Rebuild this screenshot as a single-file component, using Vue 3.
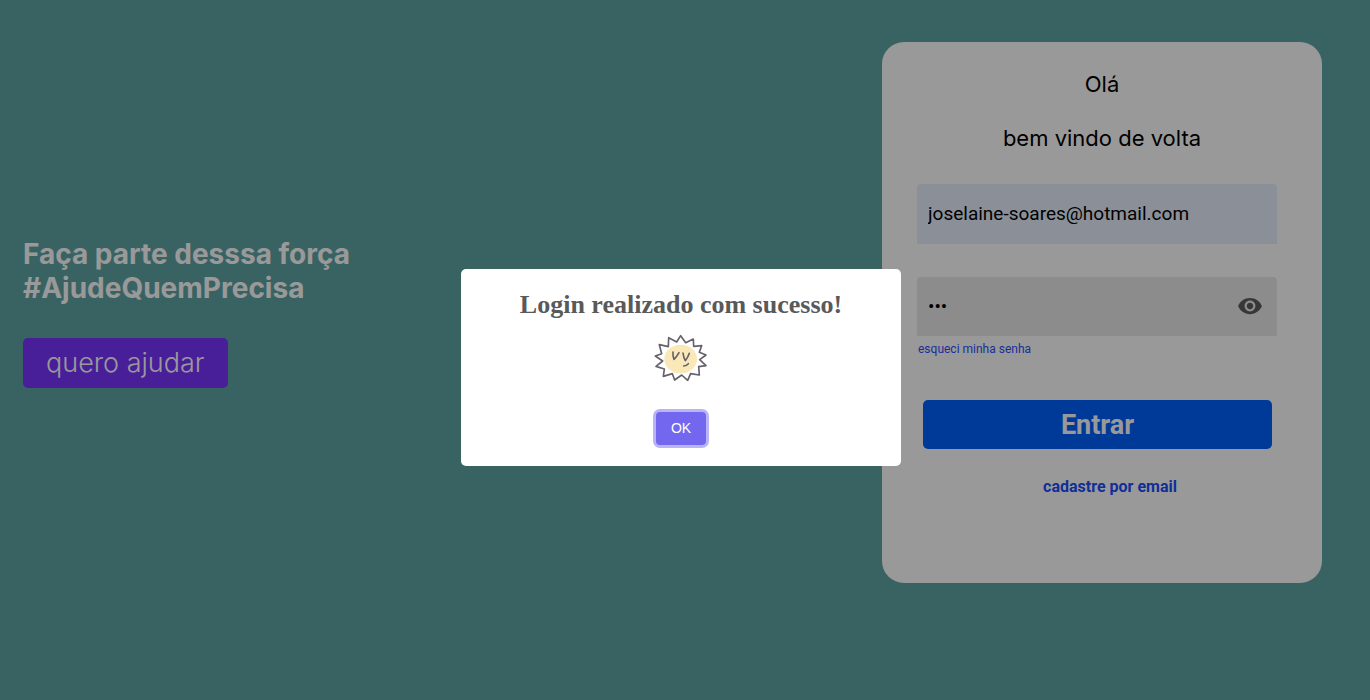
<script setup>
import { ref } from 'vue'

const email = ref('joselaine-soares@hotmail.com')
const password = ref('123')
const showPassword = ref(false)
const dialogOpen = ref(true)
</script>

<template>
  <div class="page">
    <main class="layout">
      <section class="intro">
        <h1>Faça parte desssa força<br />#AjudeQuemPrecisa</h1>
        <button type="button" class="help">quero ajudar</button>
      </section>

      <form class="card" @submit.prevent="dialogOpen = true">
        <header class="welcome">
          <p>Olá</p>
          <p>bem vindo de volta</p>
        </header>
        <div class="fields">
          <input v-model="email" class="field email" type="email" aria-label="Email" />
          <div class="field secret">
            <input v-model="password" :type="showPassword ? 'text' : 'password'" aria-label="Senha" />
            <button type="button" class="eye" aria-label="Mostrar senha" @click="showPassword = !showPassword">
              <svg viewBox="0 0 24 24" width="26" height="26" aria-hidden="true">
                <path d="M12 4.5C7 4.5 2.73 7.61 1 12c1.73 4.39 6 7.5 11 7.5s9.27-3.11 11-7.5c-1.73-4.39-6-7.5-11-7.5zM12 17c-2.76 0-5-2.24-5-5s2.24-5 5-5 5 2.24 5 5-2.24 5-5 5zm0-8c-1.66 0-3 1.34-3 3s1.34 3 3 3 3-1.34 3-3-1.34-3-3-3z" />
              </svg>
            </button>
          </div>
          <a class="forgot" href="#">esqueci minha senha</a>
          <button type="submit" class="enter">Entrar</button>
          <a class="signup" href="#">cadastre por email</a>
        </div>
      </form>
    </main>

    <div v-if="dialogOpen" class="overlay">
      <div class="dialog" role="dialog" aria-modal="true" aria-labelledby="dialog-title">
        <h2 id="dialog-title">Login realizado com sucesso!</h2>
        <svg class="sun" viewBox="612 222 162 144" width="54" height="48" aria-hidden="true">
          <path
            class="rays"
            d="M692 227 L707 248 L730 237 L731 259 L755 257 L748 277 L768 285 L749 299 L768 317 L746 320 L748 345 L722 341 L713 361 L695 345 L674 360 L667 341 L640 349 L643 327 L618 319 L638 303 L616 288 L635 281 L628 254 L655 260 L656 233 L680 246 Z"
          />
          <ellipse class="face" cx="692" cy="297" rx="49" ry="43" />
          <path class="marks" d="M669 276 Q668 289 672 298 Q681 289 687 278 M699 279 Q701 294 706 302 Q714 292 718 280 M701 318 Q710 317 715 311" />
        </svg>
        <button type="button" class="ok" @click="dialogOpen = false">OK</button>
      </div>
    </div>
  </div>
</template>

<style>
body {
  margin: 0;
}
</style>

<style scoped>
.page {
  min-height: 100vh;
  background: #5fa5a5;
  font-family: Roboto, sans-serif;
}
.page * {
  box-sizing: border-box;
}
.layout {
  display: flex;
  justify-content: space-between;
  align-items: flex-start;
  gap: 24px;
  padding: 42px 48px 42px 23px;
}
.intro {
  padding-top: 195px;
  font-family: Inter, sans-serif;
}
h1 {
  margin: 0 0 33px;
  color: #fff;
  font-size: 28px;
  line-height: 34px;
  font-weight: 700;
}
.help {
  display: block;
  height: 50px;
  padding: 0 23px 2px;
  border: 0;
  border-radius: 5px;
  background: #7832ff;
  color: #fff;
  font: 300 27px Inter, sans-serif;
}
.card {
  width: 440px;
  padding: 27px 45px 86px 35px;
  border-radius: 22px;
  background: #fff;
}
.welcome {
  padding-left: 10px;
  text-align: center;
  font: 400 22px/30px Inter, sans-serif;
}
.welcome p {
  margin: 0 0 24px;
}
.welcome p:last-child {
  margin: 0 0 31px;
}
.fields {
  display: flex;
  flex-direction: column;
}
.field {
  height: 60px;
  border: 0;
  border-radius: 4px 4px 0 0;
}
.field,
.secret input {
  color: #000;
  font: 400 19px Roboto, sans-serif;
}
.email {
  padding: 0 11px 2px;
  background: #e8f0fe;
}
.secret {
  display: flex;
  align-items: center;
  height: 59px;
  margin-top: 33px;
  padding: 0 14px 2px 11px;
  background: #e9e9e9;
}
.secret input {
  flex: 1;
  min-width: 0;
  padding: 2px 0 0;
  border: 0;
  background: transparent;
}
.eye {
  display: flex;
  padding: 0;
  border: 0;
  background: transparent;
}
.eye path {
  fill: #5c5c5c;
}
a {
  text-decoration: none;
}
.forgot {
  align-self: flex-start;
  margin: 5px 0 0 1px;
  color: #2e4fff;
  font-size: 12px;
  line-height: 16px;
}
.enter {
  height: 49px;
  margin: 43px 5px 0 6px;
  border: 0;
  border-radius: 5px;
  background: #0061ff;
  color: #fff;
  font: 700 27px Roboto, sans-serif;
}
.signup {
  align-self: center;
  margin: 28px 0 0 26px;
  color: #1a4fff;
  font-size: 16px;
  line-height: 20px;
  font-weight: 700;
}
.overlay {
  position: fixed;
  inset: 0;
  display: flex;
  align-items: center;
  justify-content: center;
  padding: 35px 8px 0 0;
  background: rgba(0, 0, 0, 0.4);
}
.dialog {
  display: flex;
  flex-direction: column;
  align-items: center;
  width: 440px;
  padding: 20px 20px 21px;
  border-radius: 5px;
  background: #fff;
}
h2 {
  margin: 0 0 13px;
  color: #595959;
  font: 700 26px/32px "Liberation Serif", serif;
}
.sun {
  display: block;
}
.rays,
.marks {
  fill: none;
  stroke: #67616b;
  stroke-width: 5;
  stroke-linejoin: round;
  stroke-linecap: round;
}
.face {
  fill: #fae8b9;
}
.ok {
  height: 33px;
  margin-top: 30px;
  padding: 0 15px 2px;
  border: 0;
  border-radius: 4px;
  background: #7367f0;
  box-shadow: 0 0 0 3px #b9b3f7;
  color: #fff;
  font: 400 14px "Liberation Sans", Arial, sans-serif;
}
</style>
